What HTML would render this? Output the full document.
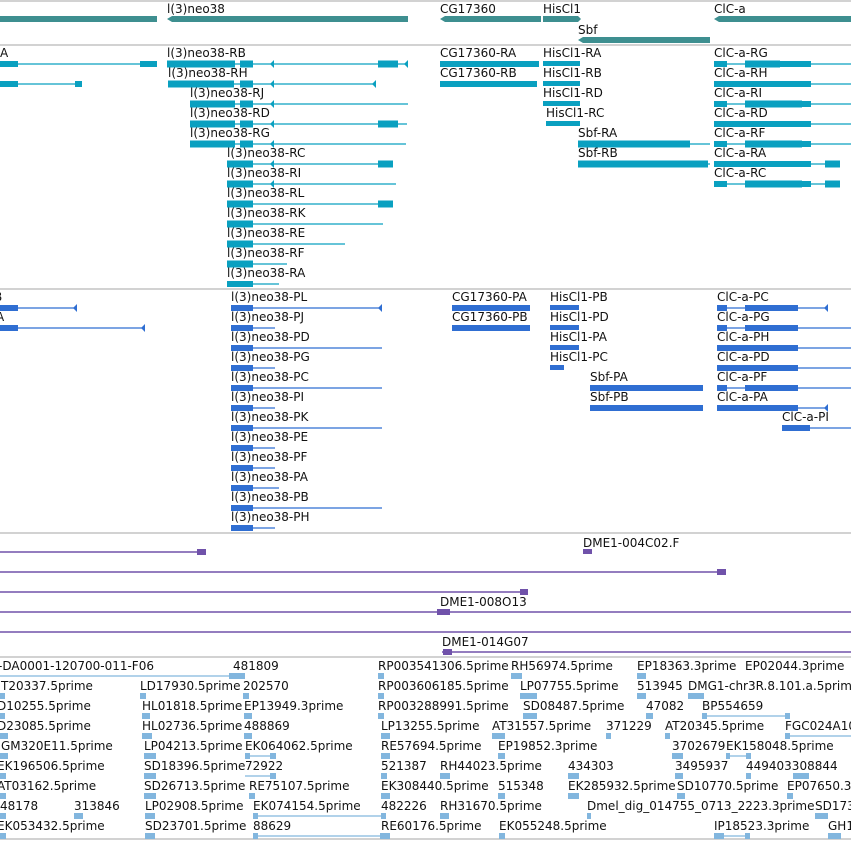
<!DOCTYPE html>
<html><head><meta charset="utf-8"><style>
html,body{margin:0;padding:0;background:#fff;width:851px;height:841px;overflow:hidden}
svg{display:block}
text{font-family:"DejaVu Sans","Liberation Sans",sans-serif;font-size:12px;fill:#111}
.sep{stroke:#c4c4c4;stroke-width:1.5}
.t1{fill:#3e8f90}
.tr line{stroke:#0aa0c0;stroke-width:1.3}.tr rect,.tr polygon{fill:#0aa0c0}
.pr line{stroke:#2f6ed2;stroke-width:1.3}.pr rect,.pr polygon{fill:#2f6ed2}
.pu line{stroke:#7052aa;stroke-width:1.5}.pu rect,.pu polygon{fill:#7052aa}
.es line{stroke:#82b6de;stroke-width:1.3}.es rect,.es polygon{fill:#82b6de}
</style></head><body>
<svg width="851" height="841" viewBox="0 0 851 841" xmlns="http://www.w3.org/2000/svg">
<line class="sep" x1="0" y1="1" x2="851" y2="1"/>
<line class="sep" x1="0" y1="45" x2="851" y2="45"/>
<line class="sep" x1="0" y1="289" x2="851" y2="289"/>
<line class="sep" x1="0" y1="533" x2="851" y2="533"/>
<line class="sep" x1="0" y1="657" x2="851" y2="657"/>
<line class="sep" x1="0" y1="839" x2="851" y2="839"/>

<!-- genes -->
<text x="167" y="13">l(3)neo38</text><text x="440" y="13">CG17360</text><text x="543" y="13">HisCl1</text><text x="714" y="13">ClC-a</text><text x="578" y="34">Sbf</text>
<rect class="t1" x="0" y="16" width="157" height="6"/>
<polygon class="t1" points="167,19 172,16 408,16 408,22 172,22"/>
<polygon class="t1" points="440,19 445,16 541,16 541,22 445,22"/>
<polygon class="t1" points="543,16 578,16 581,19 578,22 543,22"/>
<polygon class="t1" points="714,19 719,16 851,16 851,22 719,22"/>
<polygon class="t1" points="578,40 583,37 710,37 710,43 583,43"/>

<!-- transcripts -->
<g class="tr">
<text x="0" y="57">A</text>
<line x1="0" y1="64" x2="157" y2="64"/><rect x="0" y="61" width="18" height="6"/><rect x="140" y="61" width="17" height="6"/>
<line x1="0" y1="84" x2="82" y2="84"/><rect x="0" y="81" width="18" height="6"/><rect x="75" y="81" width="7" height="6"/>
<text x="167" y="57">l(3)neo38-RB</text><line x1="167" y1="64" x2="408" y2="64"/><rect x="167" y="60.5" width="68" height="7"/><rect x="240" y="60.5" width="13" height="7"/><rect x="378" y="60.5" width="20" height="7"/><polygon points="404,64 408,60 408,68"/><polygon points="270,64 274,60 274,68"/>
<text x="168" y="77">l(3)neo38-RH</text><line x1="168" y1="84" x2="376" y2="84"/><rect x="168" y="80.5" width="66" height="7"/><rect x="240" y="80.5" width="13" height="7"/><polygon points="372,84 376,80 376,88"/><polygon points="270,84 274,80 274,88"/>
<text x="190" y="97">l(3)neo38-RJ</text><line x1="190" y1="104" x2="408" y2="104"/><rect x="190" y="100.5" width="45" height="7"/><rect x="240" y="100.5" width="13" height="7"/><polygon points="270,104 274,100 274,108"/>
<text x="190" y="117">l(3)neo38-RD</text><line x1="190" y1="124" x2="407" y2="124"/><rect x="190" y="120.5" width="45" height="7"/><rect x="240" y="120.5" width="13" height="7"/><rect x="378" y="120.5" width="20" height="7"/><polygon points="270,124 274,120 274,128"/>
<text x="190" y="137">l(3)neo38-RG</text><line x1="190" y1="144" x2="406" y2="144"/><rect x="190" y="140.5" width="45" height="7"/><rect x="240" y="140.5" width="13" height="7"/><polygon points="270,144 274,140 274,148"/>
<text x="227" y="157">l(3)neo38-RC</text><line x1="227" y1="164" x2="392" y2="164"/><rect x="227" y="160.5" width="26" height="7"/><rect x="378" y="160.5" width="15" height="7"/><polygon points="270,164 274,160 274,168"/>
<text x="227" y="177">l(3)neo38-RI</text><line x1="227" y1="184" x2="396" y2="184"/><rect x="227" y="180.5" width="26" height="7"/><polygon points="270,184 274,180 274,188"/>
<text x="227" y="197">l(3)neo38-RL</text><line x1="227" y1="204" x2="392" y2="204"/><rect x="227" y="200.5" width="26" height="7"/><rect x="378" y="200.5" width="15" height="7"/>
<text x="227" y="217">l(3)neo38-RK</text><line x1="227" y1="224" x2="383" y2="224"/><rect x="227" y="220.5" width="26" height="7"/>
<text x="227" y="237">l(3)neo38-RE</text><line x1="227" y1="244" x2="345" y2="244"/><rect x="227" y="240.5" width="26" height="7"/>
<text x="227" y="257">l(3)neo38-RF</text><line x1="227" y1="264" x2="287" y2="264"/><rect x="227" y="260.5" width="26" height="7"/>
<text x="227" y="277">l(3)neo38-RA</text><line x1="227" y1="284" x2="279" y2="284"/><rect x="227" y="281" width="26" height="6"/>
<text x="440" y="57">CG17360-RA</text><rect x="440" y="61" width="99" height="6"/>
<text x="440" y="77">CG17360-RB</text><rect x="440" y="81" width="97" height="6"/>
<text x="543" y="57">HisCl1-RA</text><rect x="543" y="61" width="37" height="5"/>
<text x="543" y="77">HisCl1-RB</text><rect x="543" y="81" width="37" height="5"/>
<text x="543" y="97">HisCl1-RD</text><rect x="543" y="101" width="37" height="5"/>
<text x="546" y="117">HisCl1-RC</text><rect x="546" y="121" width="34" height="5"/>
<text x="578" y="137">Sbf-RA</text><line x1="578" y1="144" x2="710" y2="144"/><rect x="578" y="140.5" width="112" height="7"/>
<text x="578" y="157">Sbf-RB</text><line x1="578" y1="164" x2="710" y2="164"/><rect x="578" y="160.5" width="130" height="7"/>
<text x="714" y="57">ClC-a-RG</text><line x1="714" y1="64" x2="851" y2="64"/><rect x="714" y="61" width="13" height="6"/><rect x="745" y="60.5" width="35" height="7"/><rect x="780" y="61" width="22" height="6"/><rect x="795" y="61" width="16" height="6"/>
<text x="714" y="77">ClC-a-RH</text><line x1="714" y1="84" x2="851" y2="84"/><rect x="714" y="81" width="88" height="6"/><rect x="795" y="81" width="16" height="6"/>
<text x="714" y="97">ClC-a-RI</text><line x1="714" y1="104" x2="851" y2="104"/><rect x="714" y="101" width="13" height="6"/><rect x="745" y="100.5" width="57" height="7"/><rect x="795" y="101" width="16" height="6"/>
<text x="714" y="117">ClC-a-RD</text><line x1="714" y1="124" x2="851" y2="124"/><rect x="714" y="121" width="88" height="6"/><rect x="795" y="121" width="16" height="6"/>
<text x="714" y="137">ClC-a-RF</text><line x1="714" y1="144" x2="851" y2="144"/><rect x="714" y="141" width="13" height="6"/><rect x="745" y="140.5" width="57" height="7"/><rect x="795" y="141" width="16" height="6"/>
<text x="714" y="157">ClC-a-RA</text><line x1="714" y1="164" x2="840" y2="164"/><rect x="714" y="161" width="88" height="6"/><rect x="795" y="161" width="16" height="6"/><rect x="825" y="160.5" width="15" height="7"/>
<text x="714" y="177">ClC-a-RC</text><line x1="714" y1="184" x2="840" y2="184"/><rect x="714" y="181" width="13" height="6"/><rect x="745" y="180.5" width="57" height="7"/><rect x="795" y="181" width="16" height="6"/><rect x="825" y="180.5" width="15" height="7"/>
</g>

<!-- proteins -->
<g class="pr">
<text x="-6" y="301">B</text><line x1="0" y1="308" x2="77" y2="308"/><rect x="0" y="305" width="18" height="6"/><polygon points="73,308 77,304 77,312"/>
<text x="-4" y="321">A</text><line x1="0" y1="328" x2="145" y2="328"/><rect x="0" y="325" width="18" height="6"/><polygon points="141,328 145,324 145,332"/>
<text x="231" y="301">l(3)neo38-PL</text><line x1="231" y1="308" x2="382" y2="308"/><rect x="231" y="305" width="22" height="6"/><polygon points="378,308 382,304 382,312"/>
<text x="231" y="321">l(3)neo38-PJ</text><line x1="231" y1="328" x2="275" y2="328"/><rect x="231" y="325" width="22" height="6"/>
<text x="231" y="341">l(3)neo38-PD</text><line x1="231" y1="348" x2="382" y2="348"/><rect x="231" y="345" width="22" height="6"/>
<text x="231" y="361">l(3)neo38-PG</text><line x1="231" y1="368" x2="275" y2="368"/><rect x="231" y="365" width="22" height="6"/>
<text x="231" y="381">l(3)neo38-PC</text><line x1="231" y1="388" x2="382" y2="388"/><rect x="231" y="385" width="22" height="6"/>
<text x="231" y="401">l(3)neo38-PI</text><line x1="231" y1="408" x2="275" y2="408"/><rect x="231" y="405" width="22" height="6"/>
<text x="231" y="421">l(3)neo38-PK</text><line x1="231" y1="428" x2="382" y2="428"/><rect x="231" y="425" width="22" height="6"/>
<text x="231" y="441">l(3)neo38-PE</text><line x1="231" y1="448" x2="275" y2="448"/><rect x="231" y="445" width="22" height="6"/>
<text x="231" y="461">l(3)neo38-PF</text><line x1="231" y1="468" x2="275" y2="468"/><rect x="231" y="465" width="22" height="6"/>
<text x="231" y="481">l(3)neo38-PA</text><line x1="231" y1="488" x2="279" y2="488"/><rect x="231" y="485" width="22" height="6"/>
<text x="231" y="501">l(3)neo38-PB</text><line x1="231" y1="508" x2="382" y2="508"/><rect x="231" y="505" width="22" height="6"/>
<text x="231" y="521">l(3)neo38-PH</text><line x1="231" y1="528" x2="275" y2="528"/><rect x="231" y="525" width="22" height="6"/>
<text x="452" y="301">CG17360-PA</text><rect x="452" y="305" width="78" height="6"/>
<text x="452" y="321">CG17360-PB</text><rect x="452" y="325" width="78" height="6"/>
<text x="550" y="301">HisCl1-PB</text><rect x="550" y="305" width="29" height="5"/>
<text x="550" y="321">HisCl1-PD</text><rect x="550" y="325" width="29" height="5"/>
<text x="550" y="341">HisCl1-PA</text><rect x="550" y="345" width="29" height="5"/>
<text x="550" y="361">HisCl1-PC</text><rect x="550" y="365" width="14" height="5"/>
<text x="590" y="381">Sbf-PA</text><rect x="590" y="385" width="113" height="6"/>
<text x="590" y="401">Sbf-PB</text><rect x="590" y="405" width="113" height="6"/>
<text x="717" y="301">ClC-a-PC</text><line x1="717" y1="308" x2="828" y2="308"/><rect x="717" y="305" width="10" height="6"/><rect x="745" y="305" width="53" height="6"/><polygon points="824,308 828,304 828,312"/>
<text x="717" y="321">ClC-a-PG</text><line x1="717" y1="328" x2="851" y2="328"/><rect x="717" y="325" width="10" height="6"/><rect x="745" y="325" width="53" height="6"/>
<text x="717" y="341">ClC-a-PH</text><line x1="717" y1="348" x2="851" y2="348"/><rect x="717" y="345" width="81" height="6"/>
<text x="717" y="361">ClC-a-PD</text><line x1="717" y1="368" x2="851" y2="368"/><rect x="717" y="365" width="81" height="6"/>
<text x="717" y="381">ClC-a-PF</text><line x1="717" y1="388" x2="851" y2="388"/><rect x="717" y="385" width="10" height="6"/><rect x="745" y="385" width="53" height="6"/>
<text x="717" y="401">ClC-a-PA</text><line x1="717" y1="408" x2="828" y2="408"/><rect x="717" y="405" width="81" height="6"/><polygon points="824,408 828,404 828,412"/>
<text x="782" y="421">ClC-a-PI</text><line x1="782" y1="428" x2="851" y2="428"/><rect x="782" y="425" width="28" height="6"/>
</g>

<!-- purple -->
<g class="pu">
<line x1="0" y1="552" x2="205" y2="552"/><rect x="197" y="549" width="9" height="6"/>
<text x="583" y="547">DME1-004C02.F</text><rect x="583" y="549" width="9" height="5"/>
<line x1="0" y1="572" x2="726" y2="572"/><rect x="717" y="569" width="9" height="6"/>
<line x1="0" y1="592" x2="528" y2="592"/><rect x="520" y="589" width="8" height="6"/>
<text x="440" y="606">DME1-008O13</text>
<line x1="0" y1="612" x2="851" y2="612"/><rect x="437" y="609" width="13" height="6"/>
<line x1="0" y1="632" x2="851" y2="632"/>
<text x="442" y="646">DME1-014G07</text>
<line x1="442" y1="652" x2="851" y2="652"/><rect x="443" y="649" width="9" height="6"/>
</g>

<!-- ESTs -->
<g class="es">
<text x="-2" y="670">-DA0001-120700-011-F06</text><text x="233" y="670">481809</text><text x="378" y="670">RP003541306.5prime</text><text x="511" y="670">RH56974.5prime</text><text x="637" y="670">EP18363.3prime</text><text x="745" y="670">EP02044.3prime</text>
<line x1="0" y1="676" x2="240" y2="676"/><rect x="229" y="673" width="16" height="6"/><rect x="378" y="673" width="6" height="6"/><rect x="511" y="673" width="11" height="6"/><rect x="637" y="673" width="9" height="6"/>
<text x="1" y="690">T20337.5prime</text><text x="140" y="690">LD17930.5prime</text><text x="243" y="690">202570</text><text x="378" y="690">RP003606185.5prime</text><text x="520" y="690">LP07755.5prime</text><text x="637" y="690">513945</text><text x="688" y="690">DMG1-chr3R.8.101.a.5prime</text>
<rect x="0" y="693" width="5" height="6"/><rect x="140" y="693" width="6" height="6"/><rect x="243" y="693" width="6" height="6"/><rect x="378" y="693" width="6" height="6"/><rect x="520" y="693" width="17" height="6"/><rect x="637" y="693" width="9" height="6"/><rect x="688" y="693" width="16" height="6"/>
<text x="-3" y="710">D10255.5prime</text><text x="142" y="710">HL01818.5prime</text><text x="244" y="710">EP13949.3prime</text><text x="378" y="710">RP003288991.5prime</text><text x="523" y="710">SD08487.5prime</text><text x="646" y="710">47082</text><text x="702" y="710">BP554659</text>
<rect x="0" y="713" width="5" height="6"/><rect x="142" y="713" width="8" height="6"/><rect x="244" y="713" width="8" height="6"/><rect x="378" y="713" width="6" height="6"/><rect x="523" y="713" width="14" height="6"/><rect x="646" y="713" width="7" height="6"/><line x1="702" y1="716" x2="790" y2="716"/><rect x="702" y="713" width="5" height="6"/><rect x="785" y="713" width="5" height="6"/>
<text x="-3" y="730">D23085.5prime</text><text x="142" y="730">HL02736.5prime</text><text x="244" y="730">488869</text><text x="381" y="730">LP13255.5prime</text><text x="492" y="730">AT31557.5prime</text><text x="606" y="730">371229</text><text x="665" y="730">AT20345.5prime</text><text x="785" y="730">FGC024A10</text>
<rect x="0" y="733" width="8" height="6"/><rect x="142" y="733" width="10" height="6"/><rect x="244" y="733" width="8" height="6"/><rect x="381" y="733" width="9" height="6"/><rect x="492" y="733" width="13" height="6"/><rect x="606" y="733" width="5" height="6"/><rect x="665" y="733" width="5" height="6"/><line x1="785" y1="736" x2="851" y2="736"/><rect x="785" y="733" width="5" height="6"/>
<text x="1" y="750">GM320E11.5prime</text><text x="144" y="750">LP04213.5prime</text><text x="245" y="750">EK064062.5prime</text><text x="381" y="750">RE57694.5prime</text><text x="498" y="750">EP19852.3prime</text><text x="672" y="750">3702679</text><text x="726" y="750">EK158048.5prime</text>
<rect x="0" y="753" width="8" height="6"/><rect x="144" y="753" width="12" height="6"/><line x1="245" y1="756" x2="275" y2="756"/><rect x="245" y="753" width="5" height="6"/><rect x="270" y="753" width="6" height="6"/><rect x="381" y="753" width="9" height="6"/><rect x="498" y="753" width="7" height="6"/><rect x="672" y="753" width="11" height="6"/><line x1="726" y1="756" x2="750" y2="756"/><rect x="726" y="753" width="4" height="6"/><rect x="746" y="753" width="5" height="6"/>
<text x="-3" y="770">EK196506.5prime</text><text x="144" y="770">SD18396.5prime</text><text x="245" y="770">72922</text><text x="381" y="770">521387</text><text x="440" y="770">RH44023.5prime</text><text x="568" y="770">434303</text><text x="675" y="770">3495937</text><text x="746" y="770">449403308844</text>
<rect x="0" y="773" width="6" height="6"/><rect x="144" y="773" width="12" height="6"/><line x1="245" y1="776" x2="275" y2="776"/><rect x="270" y="773" width="6" height="6"/><rect x="381" y="773" width="6" height="6"/><rect x="440" y="773" width="10" height="6"/><rect x="568" y="773" width="11" height="6"/><rect x="675" y="773" width="8" height="6"/><rect x="746" y="773" width="5" height="6"/><rect x="793" y="773" width="16" height="6"/>
<text x="-3" y="790">AT03162.5prime</text><text x="144" y="790">SD26713.5prime</text><text x="249" y="790">RE75107.5prime</text><text x="381" y="790">EK308440.5prime</text><text x="498" y="790">515348</text><text x="568" y="790">EK285932.5prime</text><text x="677" y="790">SD10770.5prime</text><text x="787" y="790">EP07650.3prime</text>
<rect x="0" y="793" width="6" height="6"/><rect x="144" y="793" width="12" height="6"/><rect x="249" y="793" width="6" height="6"/><rect x="381" y="793" width="9" height="6"/><rect x="498" y="793" width="7" height="6"/><rect x="568" y="793" width="11" height="6"/><rect x="677" y="793" width="8" height="6"/><rect x="787" y="793" width="6" height="6"/>
<text x="0" y="810">48178</text><text x="74" y="810">313846</text><text x="145" y="810">LP02908.5prime</text><text x="253" y="810">EK074154.5prime</text><text x="381" y="810">482226</text><text x="440" y="810">RH31670.5prime</text><text x="587" y="810">Dmel_dig_014755_0713_2223.3prime</text><text x="815" y="810">SD173</text>
<rect x="0" y="813" width="6" height="6"/><rect x="74" y="813" width="9" height="6"/><rect x="145" y="813" width="10" height="6"/><line x1="253" y1="816" x2="385" y2="816"/><rect x="253" y="813" width="5" height="6"/><rect x="381" y="813" width="5" height="6"/><rect x="440" y="813" width="9" height="6"/><rect x="587" y="813" width="4" height="6"/><rect x="815" y="813" width="13" height="6"/>
<text x="-3" y="830">EK053432.5prime</text><text x="145" y="830">SD23701.5prime</text><text x="253" y="830">88629</text><text x="381" y="830">RE60176.5prime</text><text x="499" y="830">EK055248.5prime</text><text x="714" y="830">IP18523.3prime</text><text x="828" y="830">GH1</text>
<rect x="0" y="833" width="6" height="6"/><rect x="145" y="833" width="10" height="6"/><line x1="253" y1="836" x2="390" y2="836"/><rect x="253" y="833" width="5" height="6"/><rect x="380" y="833" width="10" height="6"/><rect x="499" y="833" width="6" height="6"/><line x1="714" y1="836" x2="750" y2="836"/><rect x="714" y="833" width="10" height="6"/><rect x="745" y="833" width="5" height="6"/><rect x="828" y="833" width="13" height="6"/>
</g>
</svg>
</body></html>
